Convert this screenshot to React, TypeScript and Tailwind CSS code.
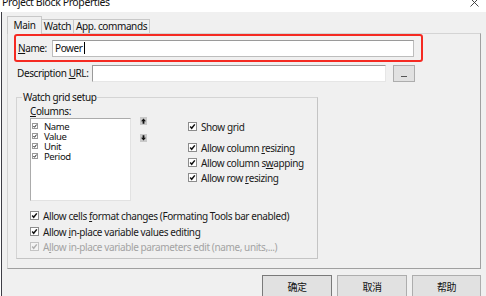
import React from "react";

const FONT = { fontFamily: '"Noto Sans", "Noto Sans CJK SC", sans-serif' };

function Check({ disabled = false }: { disabled?: boolean }) {
  return (
    <svg width="9" height="9" viewBox="0 0 9 9" className="shrink-0" aria-hidden>
      <rect x="0.5" y="0.5" width="8" height="8" fill={disabled ? "#f4f4f4" : "#fff"} stroke={disabled ? "#c4c4c4" : "#8c8c8c"} />
      <path d="M2.2 4.6 L3.7 6.3 L6.8 2.4" fill="none" stroke={disabled ? "#b0b0b0" : "#111"} strokeWidth="1.5" />
    </svg>
  );
}

function TinyCheck() {
  return (
    <svg width="6" height="6" viewBox="0 0 6 6" className="shrink-0" aria-hidden>
      <rect x="0.5" y="0.5" width="5" height="5" fill="#fff" stroke="#9a9a9a" />
      <path d="M1.5 3 L2.5 4.3 L4.6 1.6" fill="none" stroke="#222" strokeWidth="1" />
    </svg>
  );
}

function ArrowBtn({ up }: { up: boolean }) {
  return (
    <svg width="7" height="8" viewBox="0 0 7 8" aria-hidden>
      <rect width="7" height="8" fill="#c9c9c9" />
      {up ? (
        <path d="M3.5 1.5 L6 4.2 H4.4 V6.8 H2.6 V4.2 H1 Z" fill="#111" />
      ) : (
        <path d="M3.5 6.5 L6 3.8 H4.4 V1.2 H2.6 V3.8 H1 Z" fill="#111" />
      )}
    </svg>
  );
}

function CheckRow({ children, disabled = false }: { children: React.ReactNode; disabled?: boolean }) {
  return (
    <div className={`flex h-[15px] items-center gap-[4px] ${disabled ? "text-[#a3a3a3]" : "text-[#1a1a1a]"}`}>
      <Check disabled={disabled} />
      <span className="leading-[12px]">{children}</span>
    </div>
  );
}

export default function App() {
  return (
    <div
      className="relative h-[296px] w-[486px] overflow-hidden whitespace-nowrap bg-white text-[10px] leading-none tracking-[-0.4px]"
      style={FONT}
    >
      {/* Title bar */}
      <div className="flex h-[12px] items-start justify-between overflow-hidden bg-white">
        <span className="mt-[-5px] pl-[2px] text-[10.5px] leading-[14px] tracking-[-0.4px] text-[#111]">Project Block Properties</span>
        <svg width="9" height="9" viewBox="0 0 9 9" className="mr-[7px] mt-[-2px]" aria-hidden>
          <path d="M0.5 0.5 L8.5 8.5 M8.5 0.5 L0.5 8.5" stroke="#333" strokeWidth="0.9" />
        </svg>
      </div>

      {/* Dialog body */}
      <div className="ml-[1px] h-[284px] border-l border-[#3e3e46] bg-[#f0f0f0] pl-[5px] pr-[5px]">
        {/* Tabs */}
        <div className="flex h-[21px] items-end pt-[4px]">
          <div className="relative z-10 mb-[-1px] flex h-[18px] w-[35px] items-center justify-center border border-b-0 border-[#c8c8c8] bg-[#f0f0f0] pb-[1px] text-[#111]">
            Main
          </div>
          <div className="flex h-[14px] w-[32px] items-center justify-center border border-b-0 border-l-0 border-[#c8c8c8] pb-[1px] text-[#111]">
            Watch
          </div>
          <div className="flex h-[14px] w-[76px] items-center justify-center border border-b-0 border-l-0 border-[#c8c8c8] pb-[1px] text-[#111]">
            App. commands
          </div>
        </div>

        {/* Tab panel */}
        <div className="h-[236px] w-[474px] border border-b-[#a0a0a0] border-l-[#d4d4d4] border-r-[#a0a0a0] border-t-[#d4d4d4] pl-[6px]">
          {/* Name row (annotated) */}
          <div className="flex h-[28px] w-[409px] items-center rounded-[3px] border-2 border-[#f52a22] pl-[2px]">
            <span className="w-[34px] text-[#111]">
              <span className="underline underline-offset-1">N</span>ame:
            </span>
            <div className="flex h-[17px] w-[362px] items-center border border-[#bdbdbd] border-t-[#9a9a9a] bg-white pl-[2px] text-[#111]">
              Power
              <span className="ml-[1px] h-[12px] w-px bg-black" />
            </div>
          </div>

          {/* Description URL row */}
          <div className="mt-[2px] flex h-[18px] items-center">
            <span className="ml-[3px] w-[75px] text-[#111]">
              Description <span className="underline underline-offset-1">U</span>RL:
            </span>
            <div className="h-[17px] w-[294px] border border-[#e6e6e6] border-t-[#9a9a9a] border-l-[#9a9a9a] bg-white" />
            <div className="ml-[7px] flex h-[17px] w-[22px] items-end justify-center border border-[#adadad] bg-[#e1e1e1] pb-[4px]">
              <span className="block h-px w-[6px] bg-[#555]" />
            </div>
          </div>

          {/* Watch grid setup group */}
          <div className="mt-[15px] ml-[2px] h-[162px] w-[302px] border border-[#d4d4d4] border-b-[#c4c4c4] border-r-[#c4c4c4]">
            <div className="mt-[-7px] ml-[5px] w-fit bg-[#f0f0f0] px-px leading-[12px] text-[#111]">
              Watch grid setup
            </div>

            <div className="ml-[13px] mt-[3px] flex">
              {/* Columns list */}
              <div>
                <div className="h-[10px] text-[#111] leading-[10px]">
                  <span className="underline underline-offset-1">C</span>olumns:
                </div>
                <div className="mt-[2px] h-[83px] w-[101px] border border-[#ababab] border-b-[#e2e2e2] border-r-[#e2e2e2] bg-white pl-[1px] pt-[2px] text-[9.5px]">
                  {["Name", "Value", "Unit", "Period"].map((c) => (
                    <div key={c} className="flex h-[10px] items-center gap-[6px] text-[#111]">
                      <TinyCheck />
                      <span className="leading-[9px]">{c}</span>
                    </div>
                  ))}
                </div>
              </div>

              <div className="ml-[9px] mt-[11px] flex flex-col gap-[9px]">
                <ArrowBtn up />
                <ArrowBtn up={false} />
              </div>

              <div className="ml-[41px] mt-[13px] flex flex-col">
                <CheckRow>Show grid</CheckRow>
                <div className="h-[6px]" />
                <CheckRow>
                  Allow column <span className="underline underline-offset-1">r</span>esizing
                </CheckRow>
                <CheckRow>
                  Allow column s<span className="underline underline-offset-1">w</span>apping
                </CheckRow>
                <CheckRow>
                  Allow row <span className="underline underline-offset-1">r</span>esizing
                </CheckRow>
              </div>
            </div>

            <div className="ml-[13px] mt-[7px] flex flex-col">
              <CheckRow>
                Allow cells <span className="underline underline-offset-1">f</span>ormat changes (Formating Tools bar enabled)
              </CheckRow>
              <div className="h-px" />
              <CheckRow>
                Allow <span className="underline underline-offset-1">i</span>n-place variable values editing
              </CheckRow>
              <CheckRow disabled>
                A<span className="underline underline-offset-1">l</span>low in-place variable parameters edit (name, units,...)
              </CheckRow>
            </div>
          </div>
        </div>

        {/* Buttons */}
        <div className="mt-[6px] flex justify-end gap-[5px]">
          <button className="h-[24px] w-[70px] border border-[#7a7a7a] bg-[#e1e1e1] text-[10px] text-[#111]">确定</button>
          <button className="h-[24px] w-[70px] border border-[#adadad] bg-[#e1e1e1] text-[10px] text-[#111]">取消</button>
          <button className="h-[24px] w-[69px] border border-[#adadad] bg-[#e1e1e1] text-[10px] text-[#111]">帮助</button>
        </div>
      </div>
    </div>
  );
}
